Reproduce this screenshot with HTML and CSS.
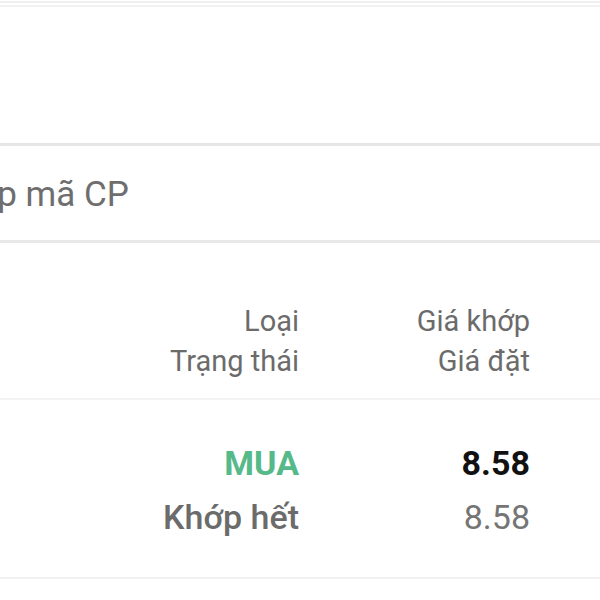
FILE: index.html
```html
<!DOCTYPE html>
<html lang="vi">
<head>
<meta charset="utf-8">
<link rel="stylesheet" href="styles.css">
</head>
<body>
<div class="screen">
  <div class="topbar"><div class="topbar-inner"></div></div>
  <div class="blank"></div>
  <div class="search">
    <span class="search-placeholder">Nhập mã CP</span>
  </div>
  <div class="table-head">
    <div class="cell">Loại</div>
    <div class="cell">Giá khớp</div>
    <div class="cell">Trạng thái</div>
    <div class="cell">Giá đặt</div>
  </div>
  <div class="order-row">
    <div class="cell buy">MUA</div>
    <div class="cell price">8.58</div>
    <div class="cell status">Khớp hết</div>
    <div class="cell order-price">8.58</div>
  </div>
</div>
</body>
</html>
```
FILE: styles.css
```css
* { box-sizing: border-box; margin: 0; padding: 0; }
html, body { background: #ffffff; }
body { font-family: Roboto, "Noto Sans", sans-serif; color: #6b6b6b; overflow: hidden; }
.screen { width: 600px; height: 600px; overflow: hidden; }
.topbar { height: 7px; border-top: 1px solid #ffffff; background: #ffffff; }
.topbar-inner { height: 6px; border-top: 2px solid #efefef; border-bottom: 2px solid #f2f2f2; }
.blank { height: 139px; border-bottom: 3px solid #e6e6e6; }
.search { height: 97px; border-bottom: 3px solid #e8e8e8; display: flex; align-items: center; overflow: hidden; white-space: nowrap; }
.search-placeholder { font-size: 35px; color: #6e6e6e; margin-left: -66px; padding-top: 2px; }
.table-head { display: grid; grid-template-columns: 299px 231px; padding: 58px 0 17px; border-bottom: 2px solid #f3f3f3; font-size: 29px; line-height: 40px; }
.cell { text-align: right; white-space: nowrap; }
.order-row { display: grid; grid-template-columns: 299px 231px; padding: 36px 0 33px; border-bottom: 2px solid #f1f1f1; font-size: 34px; line-height: 54px; }
.buy { color: #55b98a; font-weight: 700; }
.price { color: #111111; font-weight: 700; }
.status { color: #6b6b6b; font-weight: 500; }
.order-price { color: #757575; }
```
